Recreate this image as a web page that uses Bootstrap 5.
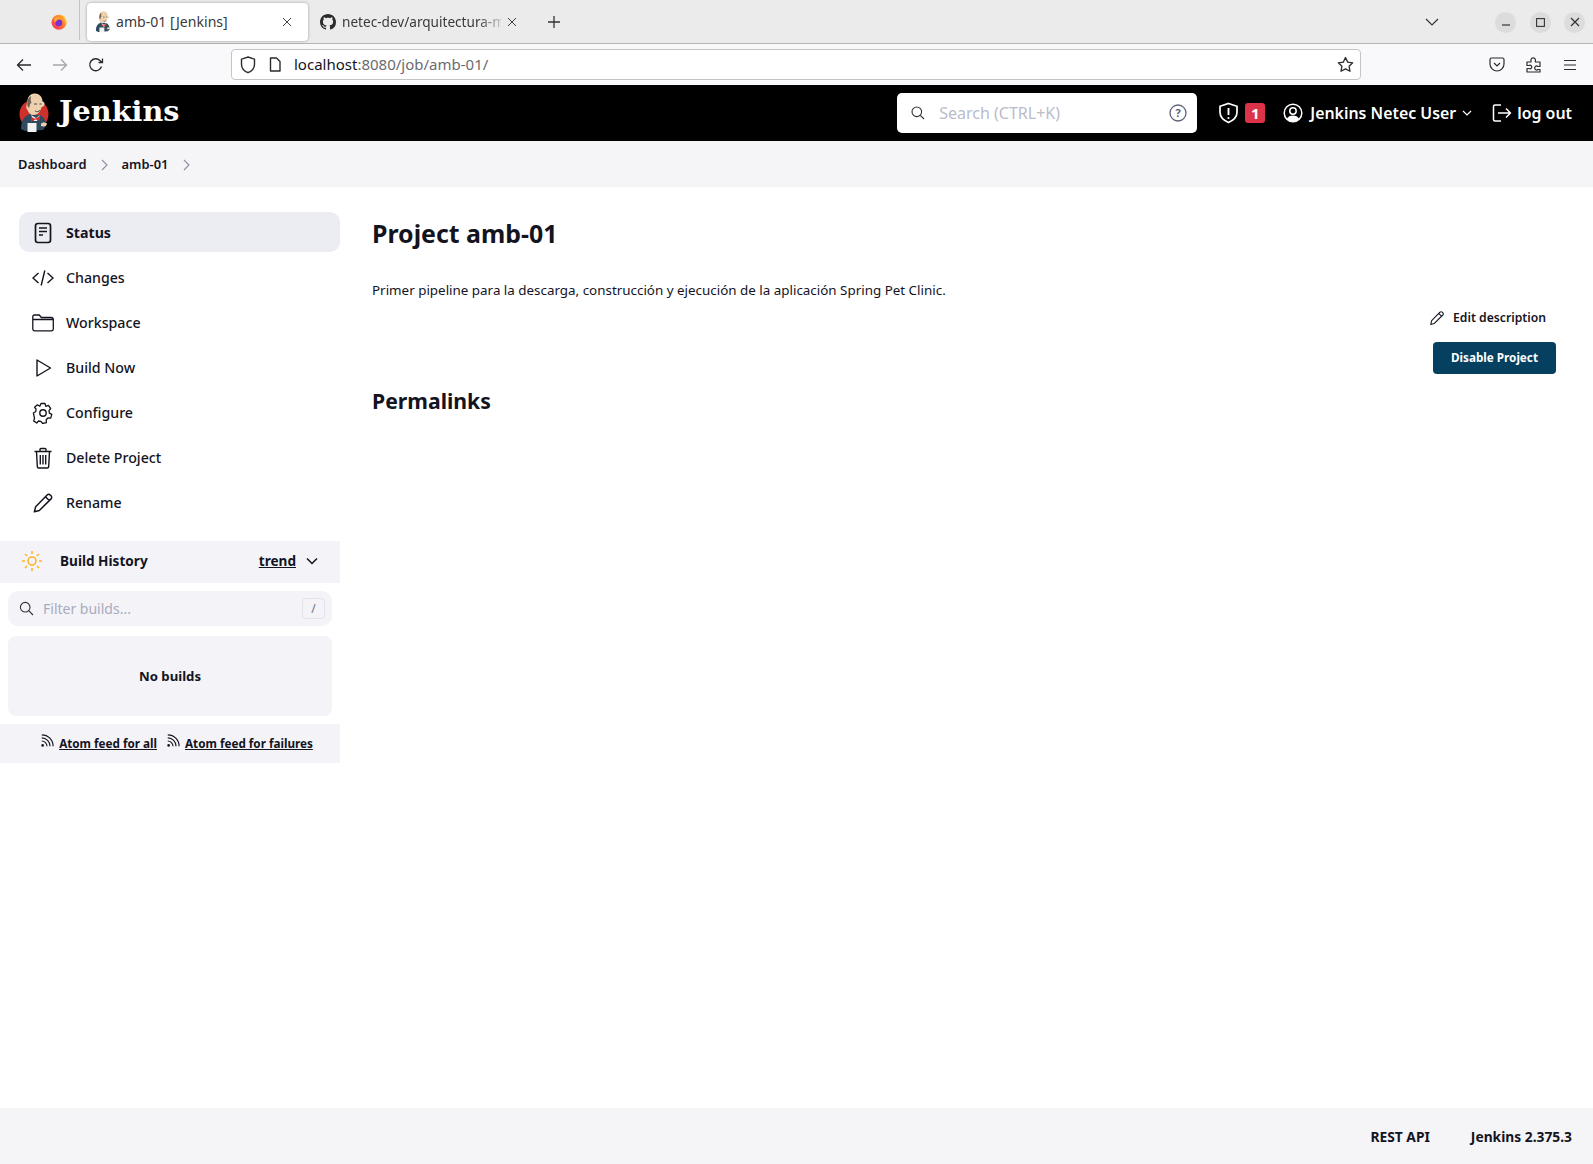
<!DOCTYPE html>
<html lang="en">
<head>
    <meta charset="UTF-8">
    <meta name="viewport" content="width=device-width, initial-scale=1.0">
    <title>amb-01 [Jenkins]</title>
    <link rel="stylesheet" href="https://cdn.jsdelivr.net/npm/bootstrap@5.3.0/dist/css/bootstrap.min.css">
    <script src="https://cdn.jsdelivr.net/npm/bootstrap@5.3.0/dist/js/bootstrap.bundle.min.js" defer></script>
    <style>
        html, body { height: 100%; }
        body {
            font-family: "Noto Sans", "Open Sans", sans-serif;
            color: #14141f;
            background: #fff;
            font-size: 14px;
            overflow: hidden;
        }
        .page-wrap { height: 1164px; }
        svg { flex: none; display: block; }

        /* browser chrome */
        .tabbar { height: 44px; background: #ebebeb; border-bottom: 1px solid #b4b4b4; padding: 3px 0 0 0; }
        .tab-lead { width: 80px; height: 40px; border-right: 1px solid #c4c4c4; padding-left: 51px; padding-top: 14px; margin-top: -3px; }
        .tab-item { height: 38px; font-size: 14.1px; padding: 0 12px 0 7px; gap: 4px; color: #3a3a3a; white-space: nowrap; }
        .tab-active { width: 221px; margin-left: 7px; background: #fff; border-radius: 4px; box-shadow: 0 0 3px rgba(0,0,0,.35); }
        .tab-other { width: 226px; padding: 0 18px 0 12px; gap: 6px; }
        .tab-other .tab-label { flex: 0 0 159px; overflow: hidden; }
        .tab-label { flex: 1; }
        .tab-fade { -webkit-mask-image: linear-gradient(90deg, #000 85%, rgba(0,0,0,.2)); mask-image: linear-gradient(90deg, #000 85%, rgba(0,0,0,.2)); }
        .win-btn { width: 21px; height: 21px; border-radius: 50%; background: #dcdcdc; }
        .toolbar { height: 41px; background: #f9f9fb; }
        .urlbar {
            width: 1130px; height: 31px; margin-left: 127px; background: #fff;
            border: 1px solid #c4c4c4; border-radius: 4px; font-size: 15px; padding: 0 6px 0 8px;
        }
        .url-host { color: #15141a; }
        .url-rest { color: #6b6b70; }

        /* jenkins header */
        .jk-header { height: 56px; background: #000; color: #fff; padding: 0 21px 0 18px; }
        .jk-brand { font-family: "DejaVu Serif", serif; font-weight: 700; font-size: 28.7px; line-height: 1; margin: -3px 0 0 9px; }
        .jk-search { width: 300px; height: 40px; background: #fff; border-radius: 5px; padding: 0 10px 0 13px; color: #b9bccb; font-size: 16px; margin-right: 21px; }
        .jk-badge { background: #dd3349; color: #fff; border-radius: 3px; width: 20px; height: 20px; font-size: 15px; font-weight: 700; margin: 0 18px 0 6px; }
        .jk-user { font-size: 15.9px; font-weight: 600; white-space: nowrap; padding-top: 1px; }

        /* breadcrumb */
        .crumbs { height: 46px; background: #f5f5f8; padding: 2px 0 0 18px; font-size: 12.9px; font-weight: 600; }

        /* side panel */
        .side-panel { width: 340px; padding-top: 25px; }
        .task-item { height: 40px; margin: 0 0 5px 19px; padding: 2px 0 0 13px; gap: 12px; border-radius: 10px; font-size: 14.2px; font-weight: 500; }
        .task-item.is-active { background: #ecedf3; font-weight: 700; }
        .task-icon { width: 22px; height: 22px; }
        .hist-head { height: 42px; background: #f3f3f8; margin-top: 19px; padding: 0 21px 2px 21px; font-weight: 700; font-size: 13.6px; }
        .hist-link { color: #14141f; text-decoration: underline; font-weight: 700; font-size: 13.6px; }
        .filter-box { height: 35px; margin: 8px 8px 0 8px; background: #f3f3f8; border-radius: 10px; padding: 0 7px 0 11px; color: #a9abbd; font-size: 14px; gap: 9px; }
        .key-hint { width: 23px; height: 21px; border: 1px solid #e2e3ea; border-radius: 4px; color: #6e7088; font-size: 12px; }
        .no-builds { height: 80px; margin: 10px 8px 0 8px; padding-top: 2px; background: #f3f3f8; border-radius: 8px; font-weight: 700; font-size: 13.2px; }
        .feed-bar { height: 39px; margin-top: 8px; background: #f3f3f8; font-size: 11.7px; font-weight: 700; gap: 9px; padding-left: 13px; }
        .feed-bar a { color: #14141f; }
        .feed-item { gap: 5px; }

        /* main panel */
        .main-panel { padding: 28px 37px 0 32px; }
        .job-title { font-size: 24.9px; font-weight: 700; line-height: 36px; margin: 0; }
        .job-desc { margin: 29px 0 0 0; font-size: 13.4px; line-height: 20px; }
        .edit-desc { margin: 8px 10px 0 0; font-size: 12.2px; font-weight: 600; gap: 8px; height: 20px; }
        .btn-disable { background: #054060; color: #fff; border: 0; border-radius: 4px; width: 123px; height: 32px; font-size: 11.7px; font-weight: 700; padding: 0; margin-top: 14px; }
        .perma-title { font-size: 21.2px; font-weight: 700; line-height: 30px; margin: 12px 0 0 0; }

        .jk-footer { height: 56px; background: #f5f5f8; font-size: 13.8px; font-weight: 700; padding: 2px 21px 0 0; gap: 41px; }
    </style>
</head>
<body>
<svg width="0" height="0" class="position-absolute">
    <defs>
        <linearGradient id="fox" x1="1" y1="0" x2="0" y2="1">
            <stop offset="0" stop-color="#ffc42e"/>
            <stop offset=".45" stop-color="#ff7a2c"/>
            <stop offset="1" stop-color="#f2246f"/>
        </linearGradient>
        <symbol id="butler" viewBox="0 0 32 40">
            <path d="M3 36c0-8 3-13 9-15l9 1c5 1 7 6 7 11l-3 4-18 1z" fill="#2f4a5e"/>
            <path d="M13 22l5 3 4-3-3 6h-3z" fill="#f0f0f0"/>
            <path d="M13 24l4 1.800 5-2.800v4.500l-4.500-1-4.500 2z" fill="#cc2f2b"/>
            <path d="M9.500 8c0-5 3.500-7.500 7.500-7.500s7.500 3 7.500 8c1.300 0 2 1 2 2.500s-1 3-3 3c-1 5-4 8-8 8-3 0-5-2-6-5-2-2-1-5 0-9z" fill="#eed0ad"/>
            <path d="M9.500 9c0-3 1.500-5 3.500-6-.5 2-.5 5 .5 6.500l-1.500 2-.8 3.500c-2-1-2.500-4-1.700-6z" fill="#6f6257"/>
            <path d="M16 11h3M21.500 11h2M17 18c2 1.200 4 1 5-1" stroke="#3d4a55" stroke-width="1" fill="none"/>
            <path d="M9.500 30h9v9h-9z" fill="#f2f2f2"/>
            <path d="M23 31c1-2 4-2 6-.5 0 2.500-3 3.500-6 2.500z" fill="#eed0ad"/>
        </symbol>
        <symbol id="pencil" viewBox="0 0 24 24">
            <path d="M16.500 3.200a2.300 2.300 0 0 1 3.300 0l1 1a2.300 2.300 0 0 1 0 3.300L8 20.200 2.600 21.600 4 16z M14.700 5.200l4.300 4.300" fill="none" stroke="currentColor" stroke-width="1.600" stroke-linejoin="round"/>
        </symbol>
        <symbol id="rss" viewBox="0 0 16 16">
            <circle cx="3" cy="13" r="1.500" fill="currentColor"/>
            <path d="M2 8a6 6 0 0 1 6 6M2 4.500a9.500 9.500 0 0 1 9.500 9.500M2 1a13 13 0 0 1 13 13" fill="none" stroke="currentColor" stroke-width="1.300"/>
        </symbol>
    </defs>
</svg>

<div class="page-wrap d-flex flex-column">
    <!-- browser tabs -->
    <div class="tabbar d-flex align-items-start">
        <div class="tab-lead">
            <svg width="16" height="16" viewBox="0 0 16 16"><circle cx="8" cy="8.300" r="7.500" fill="url(#fox)"/><path d="M11.500 1c2.500 1.500 4 4 4 7 0 1-.2 2-.6 2.800C14.500 6.500 13 3 11.500 1z" fill="#ffd73c"/><circle cx="7.800" cy="8.700" r="3.500" fill="#7a2fd0"/><path d="M3 4.500c1.500-1.300 4-1.800 6-.8 1 .5 1.800 1.300 2.200 2.300-1.500-1-3.500-1-4.700-.3L4.300 8.500C3.500 7.500 3 6 3 4.500z" fill="#ffa62b"/></svg>
        </div>
        <div class="tab-item tab-active d-flex align-items-center">
            <svg width="18" height="22"><use href="#butler"/></svg>
            <span class="tab-label">amb-01 [Jenkins]</span>
            <svg width="10" height="10" viewBox="0 0 10 10" class="me-1"><path d="M1 1l8 8M9 1l-8 8" stroke="#444" stroke-width="1"/></svg>
        </div>
        <div class="tab-item tab-other d-flex align-items-center">
            <svg width="16" height="16" viewBox="0 0 16 16"><path fill="#2b2b2b" d="M8 0C3.580 0 0 3.580 0 8c0 3.540 2.290 6.530 5.470 7.590.4.07.55-.17.55-.38 0-.19-.01-.82-.01-1.490-2.010.37-2.530-.49-2.690-.94-.09-.23-.48-.94-.82-1.130-.28-.15-.68-.52-.01-.53.63-.01 1.080.58 1.230.82.72 1.210 1.870.87 2.330.66.07-.52.28-.87.51-1.070-1.780-.2-3.640-.89-3.640-3.950 0-.87.31-1.590.82-2.150-.08-.2-.36-1.020.08-2.120 0 0 .67-.21 2.200.82.64-.18 1.320-.27 2-.27.68 0 1.360.09 2 .27 1.530-1.040 2.200-.82 2.200-.82.44 1.100.16 1.920.08 2.120.51.56.82 1.270.82 2.150 0 3.070-1.870 3.750-3.650 3.950.29.25.54.73.54 1.480 0 1.070-.01 1.930-.01 2.200 0 .21.15.46.55.38A8.013 8.013 0 0016 8c0-4.420-3.580-8-8-8z"/></svg>
            <span class="tab-label tab-fade" style="font-size:13.6px">netec-dev/arquitectura-m</span>
            <svg width="10" height="10" viewBox="0 0 10 10"><path d="M1 1l8 8M9 1l-8 8" stroke="#444" stroke-width="1"/></svg>
        </div>
        <div class="d-flex align-items-center" style="height:38px;margin-left:13px">
            <svg width="14" height="14" viewBox="0 0 14 14"><path d="M7 1v12M1 7h12" stroke="#333" stroke-width="1.300"/></svg>
        </div>
        <div class="d-flex align-items-center ms-auto" style="height:38px;padding-right:8px">
            <svg width="14" height="8" viewBox="0 0 14 8" style="margin-right:56px"><path d="M1 1l6 6 6-6" fill="none" stroke="#333" stroke-width="1.200"/></svg>
            <div class="win-btn d-flex align-items-center justify-content-center"><svg width="10" height="10" viewBox="0 0 10 10"><path d="M1 8h8" stroke="#333" stroke-width="1.200"/></svg></div>
            <div class="win-btn d-flex align-items-center justify-content-center" style="margin-left:13.500px"><svg width="9" height="9" viewBox="0 0 9 9"><rect x=".6" y=".6" width="7.800" height="7.800" fill="none" stroke="#333" stroke-width="1.100"/></svg></div>
            <div class="win-btn d-flex align-items-center justify-content-center" style="margin-left:13.500px"><svg width="10" height="10" viewBox="0 0 10 10"><path d="M1 1l8 8M9 1l-8 8" stroke="#333" stroke-width="1.200"/></svg></div>
        </div>
    </div>

    <!-- browser toolbar -->
    <div class="toolbar d-flex align-items-center" style="padding-left:16px;padding-right:16px">
        <svg width="16" height="14" viewBox="0 0 16 14"><path d="M15 7H2M7 1.500L1.500 7 7 12.500" fill="none" stroke="#2b2b2b" stroke-width="1.300"/></svg>
        <svg width="16" height="14" viewBox="0 0 16 14" style="margin-left:20px"><path d="M1 7h13M9 1.500L14.500 7 9 12.500" fill="none" stroke="#a6a6a8" stroke-width="1.300"/></svg>
        <svg width="16" height="16" viewBox="0 0 16 16" style="margin-left:20px"><path d="M13.500 9.500A6 6 0 1 1 12 3.500L14 5.500M14.500 1.500v4h-4" fill="none" stroke="#2b2b2b" stroke-width="1.300"/></svg>
        <div class="urlbar d-flex align-items-center">
            <svg width="16" height="18" viewBox="0 0 16 18"><path d="M8 1l6.500 2.200v5c0 4-3 7-6.500 8.500C4.500 15.200 1.500 12.200 1.500 8.200v-5z" fill="none" stroke="#2b2b2b" stroke-width="1.400"/></svg>
            <svg width="12" height="15" viewBox="0 0 12 15" style="margin-left:13px"><path d="M1.500 1h6L11 4.500V14H1.500z" fill="none" stroke="#2b2b2b" stroke-width="1.400" stroke-linejoin="round"/></svg>
            <span style="margin-left:13px"><span class="url-host">localhost</span><span class="url-rest">:8080/job/amb-01/</span></span>
            <svg width="17" height="17" viewBox="0 0 17 17" class="ms-auto"><path d="M8.500 1.500l2.200 4.600 5 .7-3.600 3.500.9 5-4.500-2.400L4 15.300l.9-5L1.300 6.800l5-.7z" fill="none" stroke="#2b2b2b" stroke-width="1.300" stroke-linejoin="round"/></svg>
        </div>
        <div class="d-flex align-items-center ms-auto" style="gap:21px">
            <svg width="16" height="15" viewBox="0 0 16 15"><path d="M2.500 1h11A1.500 1.500 0 0 1 15 2.500V7A7 7 0 0 1 1 7V2.500A1.500 1.500 0 0 1 2.500 1zM5 6l3 3 3-3" fill="none" stroke="#2b2b2b" stroke-width="1.200"/></svg>
            <svg width="16" height="17" viewBox="0 0 16 17"><path d="M1 6h4V4a2.200 2.200 0 1 1 4.400 0v2H14v4.500h-2a2 2 0 1 0 0 3h2V16H1v-3.500h2a1.800 1.800 0 1 0 0-3H1z" fill="none" stroke="#2b2b2b" stroke-width="1.200" stroke-linejoin="round"/></svg>
            <svg width="14" height="12" viewBox="0 0 14 12"><path d="M1 1.500h12M1 6h12M1 10.500h12" stroke="#2b2b2b" stroke-width="1.200"/></svg>
        </div>
    </div>

    <!-- jenkins header -->
    <header class="jk-header d-flex align-items-center">
        <svg width="32" height="40" viewBox="0 0 32 40"><circle cx="16" cy="21" r="14.500" fill="#cf302b"/><use href="#butler" width="32" height="40"/></svg>
        <span class="jk-brand">Jenkins</span>
        <div class="jk-search d-flex align-items-center ms-auto">
            <svg width="16" height="16" viewBox="0 0 16 16"><circle cx="6.800" cy="6.800" r="4.800" fill="none" stroke="#333" stroke-width="1.100"/><path d="M10.300 10.300L14 14" stroke="#333" stroke-width="1.100"/></svg>
            <span style="margin-left:13px">Search (CTRL+K)</span>
            <svg width="18" height="18" viewBox="0 0 18 18" class="ms-auto"><circle cx="9" cy="9" r="8" fill="none" stroke="#5c5f78" stroke-width="1.300"/><text x="9" y="13" text-anchor="middle" font-size="11" font-weight="700" fill="#5c5f78" font-family="Noto Sans">?</text></svg>
        </div>
        <svg width="21" height="22" viewBox="0 0 21 22"><path d="M10.500 1.500l8.500 2.800v6c0 4.500-3.500 8-8.500 10.200C5.500 18.300 2 14.800 2 10.300v-6z" fill="none" stroke="#fff" stroke-width="1.700"/><path d="M10.500 6v7" stroke="#fff" stroke-width="1.900"/><circle cx="10.500" cy="16" r="1.100" fill="#fff"/></svg>
        <div class="jk-badge d-flex align-items-center justify-content-center">1</div>
        <svg width="20" height="20" viewBox="0 0 20 20"><circle cx="10" cy="10" r="8.800" fill="none" stroke="#fff" stroke-width="1.500"/><circle cx="10" cy="8" r="3.200" fill="none" stroke="#fff" stroke-width="1.500"/><path d="M3.800 16c1.200-2.500 3.500-3.500 6.200-3.500s5 1 6.200 3.500c-1.500 1.800-3.800 2.800-6.200 2.800S5.300 17.800 3.800 16z" fill="#fff"/></svg>
        <span class="jk-user" style="margin-left:7px">Jenkins Netec User</span>
        <svg width="10" height="6" viewBox="0 0 10 6" style="margin:0 20px 0 6px"><path d="M1 1l4 4 4-4" fill="none" stroke="#fff" stroke-width="1.200"/></svg>
        <svg width="20" height="20" viewBox="0 0 20 20"><path d="M9 2H3a1.500 1.500 0 0 0-1.500 1.500v13A1.500 1.500 0 0 0 3 18h6M6 10h12.500M14 5.500l4.500 4.500-4.500 4.500" fill="none" stroke="#fff" stroke-width="1.500" stroke-linejoin="round"/></svg>
        <span class="jk-user" style="margin-left:5px">log out</span>
    </header>

    <!-- breadcrumb -->
    <div class="crumbs d-flex align-items-center">
        <span>Dashboard</span>
        <svg width="8" height="12" viewBox="0 0 8 12" style="margin:0 13px 0 14px"><path d="M1 1l5 5-5 5" fill="none" stroke="#8e90a2" stroke-width="1.100"/></svg>
        <span>amb-01</span>
        <svg width="8" height="12" viewBox="0 0 8 12" style="margin-left:15px"><path d="M1 1l5 5-5 5" fill="none" stroke="#8e90a2" stroke-width="1.100"/></svg>
    </div>

    <div class="d-flex flex-grow-1">
        <!-- side panel -->
        <aside class="side-panel flex-shrink-0">
            <div class="task-item is-active d-flex align-items-center">
                <svg class="task-icon" viewBox="0 0 22 22"><rect x="3.500" y="1.500" width="15" height="19" rx="2.400" fill="none" stroke="currentColor" stroke-width="1.700"/><path d="M7 6h8M7 9.500h8M7 13h4" stroke="currentColor" stroke-width="1.500"/></svg>
                <span>Status</span>
            </div>
            <div class="task-item d-flex align-items-center">
                <svg class="task-icon" viewBox="0 0 22 22"><path d="M6.500 6L1 11l5.500 5M15.500 6L21 11l-5.500 5M12.800 3.500L9.200 18.500" fill="none" stroke="currentColor" stroke-width="1.400"/></svg>
                <span>Changes</span>
            </div>
            <div class="task-item d-flex align-items-center">
                <svg class="task-icon" viewBox="0 0 22 22"><path d="M.8 4.500A1.500 1.500 0 0 1 2.300 3h5l2 2.500H19.500A1.800 1.800 0 0 1 21.300 7.300V17A1.800 1.800 0 0 1 19.500 18.800H2.500A1.800 1.800 0 0 1 .8 17zM.8 7.500h20.500" fill="none" stroke="currentColor" stroke-width="1.300" stroke-linejoin="round"/></svg>
                <span>Workspace</span>
            </div>
            <div class="task-item d-flex align-items-center">
                <svg class="task-icon" viewBox="0 0 22 22"><path d="M5 3L18.500 11 5 19z" fill="none" stroke="currentColor" stroke-width="1.400" stroke-linejoin="round"/></svg>
                <span>Build Now</span>
            </div>
            <div class="task-item d-flex align-items-center">
                <svg class="task-icon" viewBox="0 0 22 22"><circle cx="11" cy="11" r="3.200" fill="none" stroke="currentColor" stroke-width="1.400"/><path d="M9 1.500h4l.8 2.800 2.600-1 2.300 3.200-1.700 2.200.4 2.400 2.400 1.300-1.100 3.700-2.800-.1-1.700 1.800.2 2.800-3.700.9-1.800-2.200-2.300-.3-1.900 2-3-2.100.8-2.700L2 14l-.6-3 2.400-1.500.2-2.500L2.600 5.300 5.400 2.800l2.400 1.500z" fill="none" stroke="currentColor" stroke-width="1.300" stroke-linejoin="round"/></svg>
                <span>Configure</span>
            </div>
            <div class="task-item d-flex align-items-center">
                <svg class="task-icon" viewBox="0 0 22 22"><path d="M2.500 4.500h17M8 4.500V2.500a1 1 0 0 1 1-1h4a1 1 0 0 1 1 1v2M4.500 4.500l.8 15a1.500 1.500 0 0 0 1.500 1.500h8.400a1.500 1.500 0 0 0 1.500-1.500l.8-15M8.300 8v9.500M11 8v9.500M13.700 8v9.500" fill="none" stroke="currentColor" stroke-width="1.400"/></svg>
                <span>Delete Project</span>
            </div>
            <div class="task-item d-flex align-items-center">
                <svg class="task-icon"><use href="#pencil"/></svg>
                <span>Rename</span>
            </div>

            <div class="hist-head d-flex align-items-center">
                <svg width="22" height="22" viewBox="0 0 22 22"><circle cx="11" cy="11" r="4" fill="none" stroke="#fdb52b" stroke-width="1.600"/><path d="M11 1v3M11 18v3M1 11h3M18 11h3M4 4l2 2M16 16l2 2M18 4l-2 2M6 16l-2 2" stroke="#fdb52b" stroke-width="1.600"/></svg>
                <span style="margin-left:17px">Build History</span>
                <a class="hist-link ms-auto" href="#">trend</a>
                <svg width="12" height="8" viewBox="0 0 12 8" style="margin-left:10px;margin-right:1px"><path d="M1 1.500l5 5 5-5" fill="none" stroke="#14141f" stroke-width="1.500"/></svg>
            </div>
            <div class="filter-box d-flex align-items-center">
                <svg width="15" height="15" viewBox="0 0 15 15"><circle cx="6.200" cy="6.200" r="4.800" fill="none" stroke="#333" stroke-width="1.100"/><path d="M9.700 9.700L14 14" stroke="#333" stroke-width="1.100"/></svg>
                <span>Filter builds...</span>
                <div class="key-hint d-flex align-items-center justify-content-center ms-auto">/</div>
            </div>
            <div class="no-builds d-flex align-items-center justify-content-center">No builds</div>
            <div class="feed-bar d-flex align-items-center justify-content-center">
                <span class="feed-item d-flex align-items-center"><svg width="14" height="14" style="margin-top:-4px"><use href="#rss"/></svg><a href="#">Atom feed for all</a></span>
                <span class="feed-item d-flex align-items-center"><svg width="14" height="14" style="margin-top:-4px"><use href="#rss"/></svg><a href="#">Atom feed for failures</a></span>
            </div>
        </aside>

        <!-- main panel -->
        <main class="main-panel flex-grow-1">
            <h1 class="job-title">Project amb-01</h1>
            <p class="job-desc">Primer pipeline para la descarga, construcción y ejecución de la aplicación Spring Pet Clinic.</p>
            <div class="d-flex flex-column align-items-end">
                <div class="edit-desc d-flex align-items-center">
                    <svg width="16" height="16"><use href="#pencil"/></svg>
                    <span>Edit description</span>
                </div>
                <button class="btn btn-disable" type="button">Disable Project</button>
            </div>
            <h2 class="perma-title">Permalinks</h2>
        </main>
    </div>

    <footer class="jk-footer d-flex align-items-center justify-content-end">
        <span>REST API</span>
        <span>Jenkins 2.375.3</span>
    </footer>
</div>
</body>
</html>
